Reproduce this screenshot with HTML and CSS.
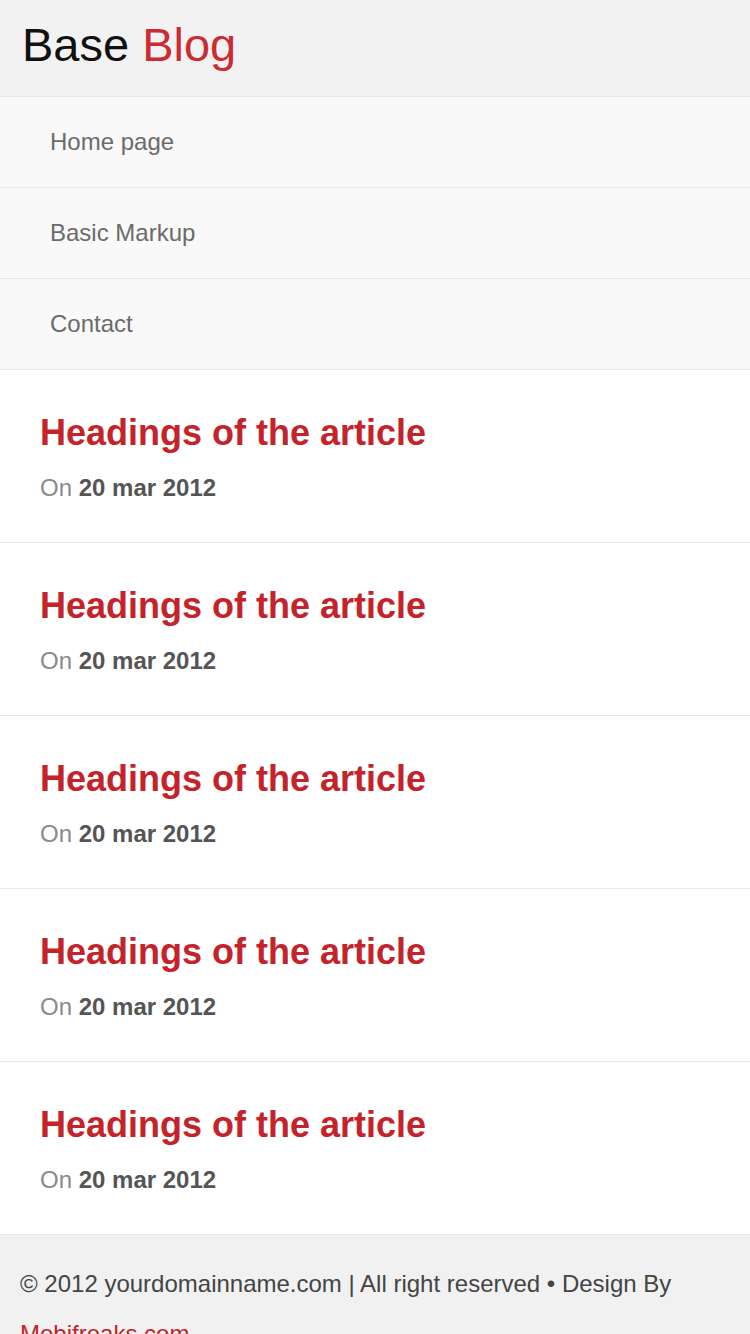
FILE: index.html
```html
<!DOCTYPE html>
<html lang="en">
<head>
<meta charset="utf-8">
<title>Base Blog</title>
<link rel="stylesheet" href="styles.css">
</head>
<body>
<header class="site-header">
  <h1 class="logo">Base <span class="logo-accent">Blog</span></h1>
</header>
<nav class="main-nav">
  <a class="nav-item" href="#">Home page</a>
  <a class="nav-item" href="#">Basic Markup</a>
  <a class="nav-item" href="#">Contact</a>
</nav>
<main class="posts">
  <article class="post">
    <h2 class="post-title">Headings of the article</h2>
    <p class="post-meta">On <strong>20 mar 2012</strong></p>
  </article>
  <article class="post">
    <h2 class="post-title">Headings of the article</h2>
    <p class="post-meta">On <strong>20 mar 2012</strong></p>
  </article>
  <article class="post">
    <h2 class="post-title">Headings of the article</h2>
    <p class="post-meta">On <strong>20 mar 2012</strong></p>
  </article>
  <article class="post">
    <h2 class="post-title">Headings of the article</h2>
    <p class="post-meta">On <strong>20 mar 2012</strong></p>
  </article>
  <article class="post">
    <h2 class="post-title">Headings of the article</h2>
    <p class="post-meta">On <strong>20 mar 2012</strong></p>
  </article>
</main>
<footer class="site-footer">
  <p class="footer-text">© 2012 yourdomainname.com | All right reserved • Design By <a class="footer-link" href="#">Mobifreaks.com</a></p>
</footer>
</body>
</html>
```
FILE: styles.css
```css
* { box-sizing: border-box; }
html, body { margin: 0; padding: 0; }
body {
  font-family: "Liberation Sans", Arial, Helvetica, sans-serif;
  background: #ffffff;
  color: #444;
}
.site-header {
  background: #f2f2f2;
  height: 97px;
  padding: 19px 22px 0;
  border-bottom: 1px solid #e6e6e6;
}
.logo {
  margin: 0;
  font-size: 47px;
  font-weight: normal;
  line-height: 52px;
  color: #111;
}
.logo-accent { color: #cc2c31; }
.main-nav {
  display: flex;
  flex-direction: column;
  background: #f9f9f9;
}
.nav-item {
  display: block;
  height: 91px;
  line-height: 90px;
  padding-left: 50px;
  font-size: 24px;
  color: #6b6b6b;
  text-decoration: none;
  border-bottom: 1px solid #e8e8e8;
}
.post {
  padding: 42px 40px 0;
  border-bottom: 1px solid #e8e8e8;
  height: 173px;
}
.post-title {
  margin: 0 0 21px;
  font-size: 36px;
  line-height: 42px;
  font-weight: bold;
  color: #c5232a;
}
.post-meta {
  margin: 0;
  font-size: 24px;
  line-height: 26px;
  color: #8a8a8a;
}
.post-meta strong { color: #555; }
.site-footer {
  background: #f1f1f1;
  padding: 24px 20px;
}
.footer-text {
  margin: 0;
  font-size: 24px;
  line-height: 50px;
  color: #444;
}
.footer-link {
  color: #c5232a;
  text-decoration: none;
}
```
